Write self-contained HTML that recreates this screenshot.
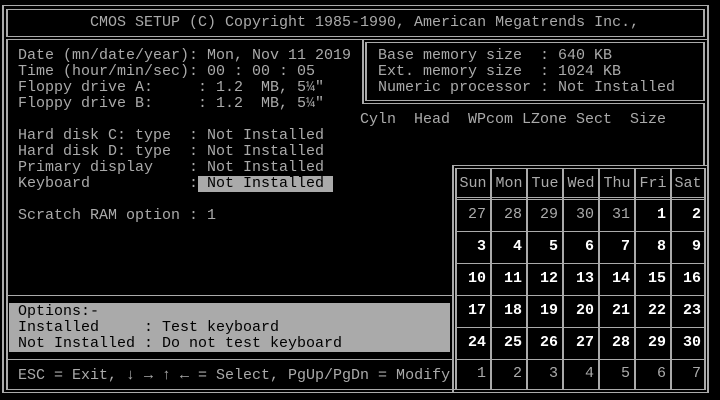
<!DOCTYPE html>
<html><head><meta charset="utf-8"><style>
html,body{margin:0;padding:0;background:#000;width:720px;height:400px;overflow:hidden;position:relative}
.t{position:absolute;font-family:"Liberation Mono","DejaVu Sans Mono",monospace;font-size:15px;line-height:16px;color:#aaa;white-space:pre;margin:0}
.h{position:absolute;height:1px;background:#aaa}
.v{position:absolute;width:2px;background:#aaa}
.c{position:absolute;width:36px;height:32px;line-height:32px;font-family:"Liberation Mono",monospace;font-size:15px;color:#fff;font-weight:bold;text-align:right;box-sizing:border-box;padding-right:5px}
.c.g{color:#aaa;font-weight:normal}
.c.hd{color:#aaa;font-weight:normal;text-align:center;padding:0;height:31px;line-height:31px}
</style></head><body>
<!-- outer frame -->
<div class="v" style="left:2px;top:5px;height:388px"></div>
<div class="v" style="left:707px;top:5px;height:388px"></div>
<div class="h" style="left:2px;top:5px;width:707px"></div>
<div class="h" style="left:2px;top:392px;width:707px"></div>
<!-- title inner -->
<div class="v" style="left:6px;top:9px;height:28px"></div>
<div class="v" style="left:703px;top:9px;height:28px"></div>
<div class="h" style="left:6px;top:9px;width:699px"></div>
<div class="h" style="left:6px;top:36px;width:699px"></div>
<!-- main inner -->
<div class="h" style="left:6px;top:39px;width:358px"></div>
<div class="v" style="left:6px;top:39px;height:351px"></div>
<div class="v" style="left:703px;top:103px;height:63px"></div>
<div class="h" style="left:6px;top:389px;width:449px"></div>
<!-- memory box -->
<div class="v" style="left:362px;top:39px;height:65px"></div>
<div class="v" style="left:365px;top:42px;height:59px"></div>
<div class="h" style="left:362px;top:39px;width:347px"></div>
<div class="h" style="left:365px;top:42px;width:340px"></div>
<div class="h" style="left:365px;top:100px;width:340px"></div>
<div class="h" style="left:362px;top:103px;width:343px"></div>
<div class="v" style="left:703px;top:42px;height:59px"></div>
<!-- calendar frame -->
<div class="h" style="left:452px;top:165px;width:255px"></div>
<div class="v" style="left:452px;top:165px;height:228px"></div>
<div class="v" style="left:455px;top:168px;height:222px"></div>
<div class="h" style="left:455px;top:168px;width:250px"></div>
<div class="v" style="left:490px;top:168px;height:222px"></div>
<div class="v" style="left:526px;top:168px;height:222px"></div>
<div class="v" style="left:562px;top:168px;height:222px"></div>
<div class="v" style="left:598px;top:168px;height:222px"></div>
<div class="v" style="left:634px;top:168px;height:222px"></div>
<div class="v" style="left:670px;top:168px;height:222px"></div>
<div class="v" style="left:704px;top:168px;height:222px"></div>
<div class="h" style="left:455px;top:197px;width:250px"></div>
<div class="h" style="left:455px;top:199px;width:250px"></div>
<div class="h" style="left:455px;top:231px;width:250px"></div>
<div class="h" style="left:455px;top:263px;width:250px"></div>
<div class="h" style="left:455px;top:295px;width:250px"></div>
<div class="h" style="left:455px;top:327px;width:250px"></div>
<div class="h" style="left:455px;top:359px;width:250px"></div>
<div class="h" style="left:455px;top:389px;width:250px"></div>
<!-- left bottom -->
<div class="h" style="left:6px;top:295px;width:448px"></div>
<div class="h" style="left:6px;top:359px;width:448px"></div>
<div style="position:absolute;left:9px;top:303px;width:441px;height:49px;background:#aaa"></div>
<div style="position:absolute;left:198px;top:176px;width:135px;height:16px;background:#aaa"></div>

<div class="t" style="left:90px;top:15px">CMOS SETUP (C) Copyright 1985-1990, American Megatrends Inc.,</div>
<div class="t" style="left:18px;top:48px">Date (mn/date/year): Mon, Nov 11 2019
Time (hour/min/sec): 00 : 00 : 05
Floppy drive A:     : 1.2  MB, 5¼"
Floppy drive B:     : 1.2  MB, 5¼"

Hard disk C: type  : Not Installed
Hard disk D: type  : Not Installed
Primary display    : Not Installed
Keyboard           :<span style="color:#000"> Not Installed</span>

Scratch RAM option : 1</div>
<div class="t" style="left:378px;top:48px">Base memory size  : 640 KB
Ext. memory size  : 1024 KB
Numeric processor : Not Installed</div>
<div class="t" style="left:360px;top:112px">Cyln  Head  WPcom LZone Sect  Size</div>
<div class="t" style="left:18px;top:304px;color:#000">Options:-
Installed     : Test keyboard
Not Installed : Do not test keyboard</div>
<div class="t" style="left:18px;top:368px">ESC = Exit, ↓ → ↑ ← = Select, PgUp/PgDn = Modify</div>

<div class="c hd" style="left:456px;top:168px;width:34px">Sun</div>
<div class="c hd" style="left:492px;top:168px;width:34px">Mon</div>
<div class="c hd" style="left:528px;top:168px;width:34px">Tue</div>
<div class="c hd" style="left:564px;top:168px;width:34px">Wed</div>
<div class="c hd" style="left:600px;top:168px;width:34px">Thu</div>
<div class="c hd" style="left:636px;top:168px;width:34px">Fri</div>
<div class="c hd" style="left:672px;top:168px;width:32px">Sat</div>

<div class="c g" style="left:455px;top:199px">27</div><div class="c g" style="left:491px;top:199px">28</div><div class="c g" style="left:527px;top:199px">29</div><div class="c g" style="left:563px;top:199px">30</div><div class="c g" style="left:599px;top:199px">31</div><div class="c" style="left:635px;top:199px">1</div><div class="c" style="left:670px;top:199px">2</div>
<div class="c" style="left:455px;top:231px">3</div><div class="c" style="left:491px;top:231px">4</div><div class="c" style="left:527px;top:231px">5</div><div class="c" style="left:563px;top:231px">6</div><div class="c" style="left:599px;top:231px">7</div><div class="c" style="left:635px;top:231px">8</div><div class="c" style="left:670px;top:231px">9</div>
<div class="c" style="left:455px;top:263px">10</div><div class="c" style="left:491px;top:263px">11</div><div class="c" style="left:527px;top:263px">12</div><div class="c" style="left:563px;top:263px">13</div><div class="c" style="left:599px;top:263px">14</div><div class="c" style="left:635px;top:263px">15</div><div class="c" style="left:670px;top:263px">16</div>
<div class="c" style="left:455px;top:295px">17</div><div class="c" style="left:491px;top:295px">18</div><div class="c" style="left:527px;top:295px">19</div><div class="c" style="left:563px;top:295px">20</div><div class="c" style="left:599px;top:295px">21</div><div class="c" style="left:635px;top:295px">22</div><div class="c" style="left:670px;top:295px">23</div>
<div class="c" style="left:455px;top:327px">24</div><div class="c" style="left:491px;top:327px">25</div><div class="c" style="left:527px;top:327px">26</div><div class="c" style="left:563px;top:327px">27</div><div class="c" style="left:599px;top:327px">28</div><div class="c" style="left:635px;top:327px">29</div><div class="c" style="left:670px;top:327px">30</div>
<div class="c g" style="left:455px;top:358px">1</div><div class="c g" style="left:491px;top:358px">2</div><div class="c g" style="left:527px;top:358px">3</div><div class="c g" style="left:563px;top:358px">4</div><div class="c g" style="left:599px;top:358px">5</div><div class="c g" style="left:635px;top:358px">6</div><div class="c g" style="left:670px;top:358px">7</div>
</body></html>
